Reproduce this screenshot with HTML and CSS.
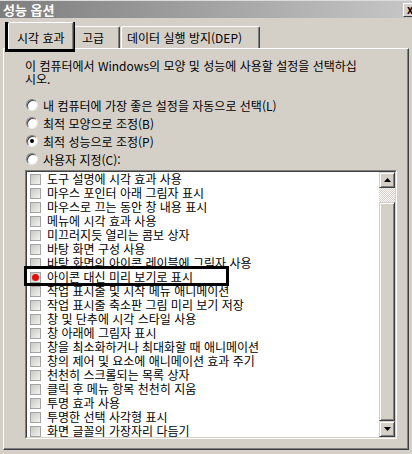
FILE: index.html
```html
<!DOCTYPE html>
<html lang="ko">
<head>
    <meta charset="UTF-8">
    <meta name="viewport" content="width=device-width, initial-scale=1.0">
    <title>성능 옵션</title>
    <link rel="stylesheet" href="styles.css">
</head>
<body>
    <!-- Title bar -->
    <div class="title-bar">
        <span class="title">성능 옵션</span>
        <span class="close-btn">x</span>
    </div>

    <!-- Tabs -->
    <div class="tabs">
        <div class="tab tab-visual active">시각 효과</div>
        <div class="tab tab-advanced">고급</div>
        <div class="tab tab-dep">데이터 실행 방지(DEP)</div>
    </div>

    <div class="pane">
        <p class="intro">이 컴퓨터에서 Windows의 모양 및 성능에 사용할 설정을 선택하십<br>시오.</p>

        <div class="radio-group">
            <div class="radio-row"><span class="radio"></span>내 컴퓨터에 가장 좋은 설정을 자동으로 선택(L)</div>
            <div class="radio-row"><span class="radio"></span>최적 모양으로 조정(B)</div>
            <div class="radio-row"><span class="radio checked"></span>최적 성능으로 조정(P)</div>
            <div class="radio-row"><span class="radio"></span>사용자 지정(C):</div>
        </div>

        <div class="list-box">
            <div class="list-inner">
                <ul class="check-list">
                    <li><span class="check"></span>도구 설명에 시각 효과 사용</li>
                    <li><span class="check"></span>마우스 포인터 아래 그림자 표시</li>
                    <li><span class="check"></span>마우스로 끄는 동안 창 내용 표시</li>
                    <li><span class="check"></span>메뉴에 시각 효과 사용</li>
                    <li><span class="check"></span>미끄러지듯 열리는 콤보 상자</li>
                    <li><span class="check"></span>바탕 화면 구성 사용</li>
                    <li><span class="check"></span>바탕 화면의 아이콘 레이블에 그림자 사용</li>
                    <li><span class="check"><span class="red-dot"></span></span>아이콘 대신 미리 보기로 표시</li>
                    <li><span class="check"></span>작업 표시줄 및 시작 메뉴 애니메이션</li>
                    <li><span class="check"></span>작업 표시줄 축소판 그림 미리 보기 저장</li>
                    <li><span class="check"></span>창 및 단추에 시각 스타일 사용</li>
                    <li><span class="check"></span>창 아래에 그림자 표시</li>
                    <li><span class="check"></span>창을 최소화하거나 최대화할 때 애니메이션</li>
                    <li><span class="check"></span>창의 제어 및 요소에 애니메이션 효과 주기</li>
                    <li><span class="check"></span>천천히 스크롤되는 목록 상자</li>
                    <li><span class="check"></span>클릭 후 메뉴 항목 천천히 지움</li>
                    <li><span class="check"></span>투명 효과 사용</li>
                    <li><span class="check"></span>투명한 선택 사각형 표시</li>
                    <li><span class="check"></span>화면 글꼴의 가장자리 다듬기</li>
                </ul>
                <div class="scrollbar">
                    <div class="sb-btn">
                        <svg width="7" height="4" viewBox="0 0 7 4"><polygon points="3.5,0 7,4 0,4" fill="#000"/></svg>
                    </div>
                    <div class="sb-track"></div>
                    <div class="sb-thumb"></div>
                    <div class="sb-btn">
                        <svg width="7" height="4" viewBox="0 0 7 4"><polygon points="0,0 7,0 3.5,4" fill="#000"/></svg>
                    </div>
                </div>
            </div>
        </div>
    </div>

    <!-- annotation boxes drawn over the dialog -->
    <div class="mark mark-tab"></div>
    <div class="mark mark-item"></div>
</body>
</html>
```

FILE: styles.css
```css
* {
    box-sizing: border-box;
}

body {
    margin: 0;
    width: 412px;
    height: 454px;
    overflow: hidden;
    position: relative;
    background-color: #d4d0c8;
    font-family: "Noto Sans CJK KR", "Noto Sans", sans-serif;
    font-size: 12px;
    color: #000;
}

/* Title bar */
.title-bar {
    display: flex;
    justify-content: space-between;
    align-items: center;
    height: 18px;
    padding-left: 3px;
    background: linear-gradient(to right, #7e7e7e, #c6c6c6);
    border-top: 1px solid #dcdcdc;
    overflow: hidden;
}

.title {
    color: #fff;
    font-weight: bold;
    font-size: 13px;
    line-height: 16px;
}

.close-btn {
    width: 16px;
    height: 14px;
    margin-right: -7px;
    background-color: #d4d0c8;
    border-top: 1px solid #fff;
    border-left: 1px solid #fff;
    border-bottom: 1px solid #404040;
    font-weight: bold;
    font-size: 11px;
    line-height: 11px;
    padding-left: 3px;
}

/* Tabs */
.tabs {
    display: flex;
    align-items: flex-end;
    height: 30px;
    padding-left: 8px;
}

.tab {
    height: 22px;
    padding-top: 2px;
    line-height: 18px;
    white-space: nowrap;
    border-top: 1px solid #fff;
    border-left: 1px solid #fff;
    border-right: 1px solid #404040;
    box-shadow: inset -1px 0 #808080;
    border-radius: 2px 2px 0 0;
}

.tab.active {
    position: relative;
    z-index: 1;
    height: 27px;
    margin-bottom: -1px;
    padding-top: 4px;
    line-height: 22px;
    background-color: #d4d0c8;
}

.tab-visual {
    width: 66px;
    padding-left: 8px;
}

.tab-advanced {
    width: 46px;
    padding-left: 7px;
}

.tab-dep {
    width: 139px;
    margin-left: 1px;
    padding-left: 5px;
}

/* Tab page */
.pane {
    width: 406px;
    height: 402px;
    margin-left: 3px;
    padding: 10px 0 0 21px;
    border-top: 1px solid #fff;
    border-left: 1px solid #fff;
    border-right: 1px solid #404040;
    border-bottom: 1px solid #404040;
    box-shadow: inset -1px -1px #808080;
}

.intro {
    margin: 0;
    line-height: 13px;
}

.radio-group {
    margin-top: 11px;
}

.radio-row {
    display: flex;
    align-items: center;
    gap: 5px;
    height: 18px;
    white-space: nowrap;
}

.radio {
    position: relative;
    width: 12px;
    height: 12px;
    margin-left: 1px;
    border-radius: 50%;
    background-color: #fff;
    border: 1px solid;
    border-color: #808080 #e8e8e8 #e8e8e8 #808080;
    box-shadow: inset 1px 1px #404040;
}

.radio.checked::after {
    content: "";
    position: absolute;
    left: 3px;
    top: 3px;
    width: 4px;
    height: 4px;
    border-radius: 50%;
    background-color: #000;
}

/* List box with checkboxes */
.list-box {
    width: 372px;
    height: 269px;
    margin-top: 2px;
    border: 1px solid;
    border-color: #808080 #fff #fff #808080;
}

.list-inner {
    display: flex;
    height: 100%;
    background-color: #fff;
    border: 1px solid;
    border-color: #404040 #d4d0c8 #d4d0c8 #404040;
}

.check-list {
    flex: 1;
    list-style: none;
    margin: 0;
    padding: 0;
}

.check-list li {
    display: flex;
    align-items: center;
    gap: 6px;
    height: 14px;
    padding-left: 3px;
    line-height: 14px;
    white-space: nowrap;
}

.check {
    position: relative;
    flex: none;
    width: 11px;
    height: 11px;
    border: 1px solid #a4a4a4;
    background: linear-gradient(135deg, #c8c8c4, #f2f2f0);
}

.red-dot {
    position: absolute;
    left: 1px;
    top: 1px;
    width: 7px;
    height: 7px;
    border-radius: 50%;
    background-color: #e41010;
}

/* Scrollbar */
.scrollbar {
    display: flex;
    flex-direction: column;
    width: 16px;
}

.sb-btn,
.sb-thumb {
    background-color: #d4d0c8;
    border: 1px solid;
    border-color: #d4d0c8 #404040 #404040 #d4d0c8;
    box-shadow: inset 1px 1px #fff, inset -1px -1px #808080;
}

.sb-btn {
    display: flex;
    justify-content: center;
    align-items: center;
    height: 16px;
}

.sb-track {
    height: 14px;
    background: repeating-conic-gradient(#fff 0 25%, #d4d0c8 0 50%) 0 0 / 2px 2px;
}

.sb-thumb {
    flex: 1;
}

/* Black annotation rectangles */
.mark {
    position: absolute;
    border: 3px solid #000;
}

.mark-tab {
    left: 5px;
    top: 22px;
    width: 70px;
    height: 30px;
}

.mark-item {
    left: 24px;
    top: 266px;
    width: 205px;
    height: 20px;
}
```
